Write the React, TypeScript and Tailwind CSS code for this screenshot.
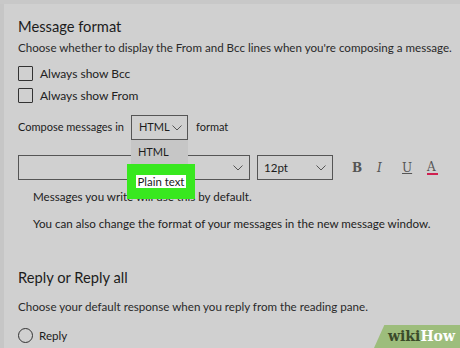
import React from 'react';

const font = { fontFamily: 'Lato, "Open Sans", sans-serif' };

const Chevron = ({ className = '' }: { className?: string }) => (
  <svg width="10" height="6" viewBox="0 0 10 6" className={className}>
    <path d="M0.5 0.5l4.5 4.5L9.5 0.5" fill="none" stroke="#555" strokeWidth="1" />
  </svg>
);

const Checkbox = ({ label }: { label: string }) => (
  <label className="flex items-center gap-[7px] h-[15px]">
    <span className="w-[15px] h-[15px] shrink-0 border border-[#333] rounded-[1px]" />
    <span className="text-[12px] text-[#222]">{label}</span>
  </label>
);

export default function App() {
  return (
    <div className="w-[460px] h-[348px] bg-[#d0d0d0] overflow-hidden relative text-[#1c1c1c] whitespace-nowrap" style={font}>
      <div className="h-[4px] bg-[#c8c8c8]" />
      <div className="flex">
        <div className="w-[4px] shrink-0 h-[344px] bg-[#c6c6c6]" />
        <div className="pl-[14px] pr-[10px] flex-1 min-w-0">
          <h2 className="text-[14.7px] leading-[20px] mt-[12px]">Message format</h2>
          <p className="text-[11.6px] leading-[16px] mt-[4px] text-[#2a2a2a]">
            Choose whether to display the From and Bcc lines when you're composing a message.
          </p>
          <div className="flex flex-col gap-[7px] mt-[10px]">
            <Checkbox label="Always show Bcc" />
            <Checkbox label="Always show From" />
          </div>

          <div className="flex items-center mt-[12px] h-[25px] text-[11px]">
            <span>Compose messages in</span>
            <div className="relative ml-[7px]">
              <div className="w-[57px] h-[25px] border border-[#555] flex items-center justify-between pl-[7px] pr-[5px]">
                <span>HTML</span>
                <Chevron />
              </div>
              <div className="absolute left-0 top-[25px] w-[57px] h-[24px] bg-[#c6c6c6] flex items-center pl-[7px] z-10">
                <span>HTML</span>
              </div>
              <div className="absolute left-[-4px] top-[49px] w-[68px] h-[35px] bg-[#38e81f] flex items-center justify-center z-10">
                <span className="bg-white w-[50px] text-center leading-[13px] text-[11.4px]">Plain text</span>
              </div>
            </div>
            <span className="ml-[8px]">format</span>
          </div>

          <div className="flex items-center mt-[15px] h-[25px]">
            <div className="w-[232px] h-[25px] border border-[#555] flex items-center justify-end pr-[6px]">
              <Chevron />
            </div>
            <div className="w-[76px] h-[25px] ml-[7px] border border-[#555] flex items-center justify-between pl-[6px] pr-[6px] text-[11.6px]">
              <span>12pt</span>
              <Chevron />
            </div>
            <div className="flex items-center ml-[19px] gap-[14px] text-[12px] text-[#555]" style={{ fontFamily: '"DejaVu Serif", serif' }}>
              <span className="font-bold w-[11px]">B</span>
              <span className="italic w-[11px]">I</span>
              <span className="underline w-[11px]">U</span>
              <span className="w-[11px] border-b-2 border-[#d02050] leading-[12px]">A</span>
            </div>
          </div>

          <div className="pl-[15px] text-[11.6px] text-[#222]">
            <p className="mt-[9px] leading-[16px]">Messages you write will use this by default.</p>
            <p className="mt-[11px] leading-[16px]">You can also change the format of your messages in the new message window.</p>
          </div>

          <h2 className="text-[14.7px] leading-[20px] mt-[35px]">Reply or Reply all</h2>
          <p className="text-[11.6px] leading-[16px] mt-[12px] text-[#2a2a2a]">
            Choose your default response when you reply from the reading pane.
          </p>
          <label className="flex items-center gap-[6px] mt-[12px]">
            <span className="w-[15px] h-[15px] shrink-0 rounded-full border border-[#333]" />
            <span className="text-[11.6px]">Reply</span>
          </label>
        </div>
      </div>

      <div className="absolute right-0 bottom-0 w-[86px] h-[23px] bg-[#9dbd7c] [clip-path:polygon(12%_0,100%_0,100%_100%,0_100%)] flex items-center justify-end pr-[5px]">
        <span className="text-[14px] font-bold" style={{ fontFamily: '"DejaVu Serif", serif' }}>
          <span className="text-[#3a4a2a]">wiki</span>
          <span className="text-white">How</span>
        </span>
      </div>
    </div>
  );
}
